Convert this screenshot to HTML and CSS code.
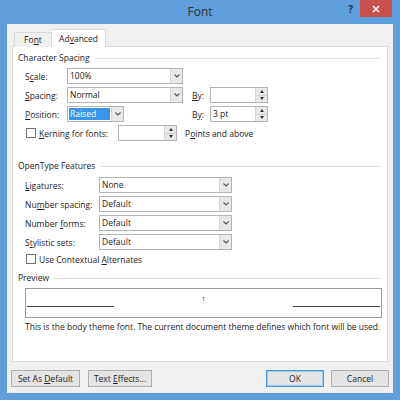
FILE: index.html
```html
<!DOCTYPE html>
<html>
<head>
<meta charset="utf-8">
<title>Font</title>
<link rel="stylesheet" href="styles.css">
</head>
<body>
<div class="win">
  <div class="titlebar">
    <div></div>
    <div class="title">Font</div>
    <div class="ctrls">
      <span class="help">?</span>
      <span class="close"><svg width="8" height="8" viewBox="0 0 8 8"><path d="M1 1L7 7M7 1L1 7" stroke="#fff" stroke-width="1.6"/></svg></span>
    </div>
  </div>
  <div class="client">
    <div class="tabs">
      <div class="tab">Fo<u>n</u>t</div>
      <div class="tab active">Ad<u>v</u>anced</div>
    </div>
    <div class="panel">
      <div class="legend">Character Spacing</div>
      <div class="rows cs">
        <div class="row">
          <span class="lbl w42">S<u>c</u>ale:</span>
          <div class="select w116"><span class="val">100%</span><span class="arr"><svg width="6" height="4" viewBox="0 0 6 4"><path d="M0.5 0.5L3 3L5.5 0.5" fill="none" stroke="#555" stroke-width="1.1"/></svg></span></div>
        </div>
        <div class="row">
          <span class="lbl w42"><u>S</u>pacing:</span>
          <div class="selcell"><div class="select w116"><span class="val">Normal</span><span class="arr"><svg width="6" height="4" viewBox="0 0 6 4"><path d="M0.5 0.5L3 3L5.5 0.5" fill="none" stroke="#555" stroke-width="1.1"/></svg></span></div></div>
          <span class="lbl w18"><u>B</u>y:</span>
          <div class="spinbox w58"><span class="val"></span><span class="spin"><span class="up"></span><span class="dn"></span></span></div>
        </div>
        <div class="row">
          <span class="lbl w42"><u>P</u>osition:</span>
          <div class="selcell"><div class="select w57"><span class="val sel">Raised</span><span class="arr"><svg width="6" height="4" viewBox="0 0 6 4"><path d="M0.5 0.5L3 3L5.5 0.5" fill="none" stroke="#555" stroke-width="1.1"/></svg></span></div></div>
          <span class="lbl w18">B<u>y</u>:</span>
          <div class="spinbox w58"><span class="val">3 pt</span><span class="spin"><span class="up"></span><span class="dn"></span></span></div>
        </div>
        <div class="row">
          <span class="chklbl w93"><span class="check"></span><span><u>K</u>erning for fonts:</span></span>
          <div class="spinbox w59"><span class="val"></span><span class="spin"><span class="up"></span><span class="dn"></span></span></div>
          <span class="after">P<u>o</u>ints and above</span>
        </div>
      </div>

      <div class="legend ot">OpenType Features</div>
      <div class="rows ots">
        <div class="row">
          <span class="lbl w74"><u>L</u>igatures:</span>
          <div class="select w133"><span class="val">None</span><span class="arr"><svg width="6" height="4" viewBox="0 0 6 4"><path d="M0.5 0.5L3 3L5.5 0.5" fill="none" stroke="#555" stroke-width="1.1"/></svg></span></div>
        </div>
        <div class="row">
          <span class="lbl w74">Nu<u>m</u>ber spacing:</span>
          <div class="select w133"><span class="val">Default</span><span class="arr"><svg width="6" height="4" viewBox="0 0 6 4"><path d="M0.5 0.5L3 3L5.5 0.5" fill="none" stroke="#555" stroke-width="1.1"/></svg></span></div>
        </div>
        <div class="row">
          <span class="lbl w74">Number <u>f</u>orms:</span>
          <div class="select w133"><span class="val">Default</span><span class="arr"><svg width="6" height="4" viewBox="0 0 6 4"><path d="M0.5 0.5L3 3L5.5 0.5" fill="none" stroke="#555" stroke-width="1.1"/></svg></span></div>
        </div>
        <div class="row">
          <span class="lbl w74">S<u>t</u>ylistic sets:</span>
          <div class="select w133"><span class="val">Default</span><span class="arr"><svg width="6" height="4" viewBox="0 0 6 4"><path d="M0.5 0.5L3 3L5.5 0.5" fill="none" stroke="#555" stroke-width="1.1"/></svg></span></div>
        </div>
      </div>
      <div class="checkrow"><span class="check"></span><span>Use Contextual <u>A</u>lternates</span></div>

      <div class="legend pvh">Preview</div>
      <div class="preview">
        <span class="pline"></span>
        <span class="pmid">1</span>
        <span class="pline"></span>
      </div>
      <div class="desc">This is the body theme font. The current document theme defines which font will be used.</div>
    </div>
    <div class="buttons">
      <button class="btn w69">Set As <u>D</u>efault</button>
      <button class="btn w64">Text <u>E</u>ffects...</button>
      <span class="grow"></span>
      <button class="btn w58 default">OK</button>
      <button class="btn w58">Cancel</button>
    </div>
  </div>
</div>
</body>
</html>
```

FILE: styles.css
```css
* { box-sizing: border-box; }
html, body { margin: 0; padding: 0; }
body {
  width: 400px;
  height: 400px;
  overflow: hidden;
  font-family: "Open Sans", "Noto Sans", sans-serif;
  font-size: 8.5px;
  color: #222;
}
u { text-decoration: underline; text-underline-offset: 1px; text-decoration-thickness: 1px; }

.win {
  width: 400px;
  height: 400px;
  background: #5e9fdc;
  display: flex;
  flex-direction: column;
}

.titlebar {
  height: 24px;
  display: grid;
  grid-template-columns: 1fr auto 1fr;
  align-items: center;
}
.title {
  font-size: 12px;
  color: #333;
  line-height: 24px;
}
.ctrls {
  justify-self: end;
  align-self: start;
  display: flex;
  align-items: flex-start;
  margin-right: 8px;
}
.help {
  font-size: 10px;
  font-weight: 700;
  color: #1f3556;
  margin-top: 3px;
  margin-right: 7px;
  line-height: 12px;
}
.close {
  width: 32px;
  height: 17px;
  background: #c9524f;
  display: flex;
  align-items: center;
  justify-content: center;
}

.client {
  flex: 1;
  margin: 0 7px 7px 7px;
  background: #f0f0f0;
  padding: 5px 4px 5px 4px;
  display: flex;
  flex-direction: column;
}

.tabs {
  display: flex;
  align-items: flex-end;
  margin-left: 3px;
  height: 18px;
  margin-bottom: -1px;
  position: relative;
  z-index: 1;
}
.tab {
  height: 15px;
  width: 38px;
  border: 1px solid #d9d9d9;
  border-bottom: none;
  background: #f0f0f0;
  text-align: center;
  line-height: 14px;
}
.tab.active {
  height: 18px;
  width: 54px;
  background: #fff;
  border-left: none;
  line-height: 17px;
}

.panel {
  margin: 0 1px;
  height: 316px;
  background: #fff;
  border: 1px solid #d9d9d9;
  padding: 5px 6px 0 5px;
}

.legend {
  display: flex;
  align-items: center;
  height: 12px;
  line-height: 12px;
}
.legend::after {
  content: "";
  flex: 1;
  margin-left: 5px;
  border-top: 1px solid #e0e0e0;
}

.rows { display: flex; flex-direction: column; gap: 3px; padding-left: 7px; }
.rows.cs { margin-top: 4px; }
.row { display: flex; align-items: center; height: 16px; }

.lbl { flex: none; display: block; white-space: nowrap; }
.chklbl { flex: none; display: flex; align-items: center; white-space: nowrap; }
.w18 { width: 18px; }
.w42 { width: 42px; }
.w74 { width: 74px; }
.w93 { width: 93px; }
.selcell { width: 125px; flex: none; }

.select, .spinbox {
  flex: none;
  height: 16px;
  border: 1px solid #b4b4b4;
  background: #fff;
  display: flex;
}
.w57 { width: 57px; }
.w58 { width: 58px; }
.w59 { width: 59px; }
.w116 { width: 116px; }
.w133 { width: 133px; }
.w64 { width: 64px; }
.w69 { width: 69px; }

.val {
  flex: 1;
  padding-left: 2px;
  line-height: 14px;
  white-space: nowrap;
  overflow: hidden;
}
.val.sel {
  margin: 1px;
  padding-left: 1px;
  line-height: 12px;
  background: #3a94ec;
  color: #fff;
}
.arr {
  width: 12px;
  flex: none;
  background: #e8e8e8;
  border-left: 1px solid #d6d6d6;
  display: flex;
  align-items: center;
  justify-content: center;
}
.spin {
  width: 12px;
  flex: none;
  background: #e8e8e8;
  border-left: 1px solid #d6d6d6;
  display: flex;
  flex-direction: column;
}
.spin .up, .spin .dn {
  flex: 1;
  display: flex;
  align-items: center;
  justify-content: center;
}
.spin .up { border-bottom: 1px solid #d0d0d0; }
.spin .up::before {
  content: "";
  border-left: 2.5px solid transparent;
  border-right: 2.5px solid transparent;
  border-bottom: 3px solid #333;
}
.spin .dn::before {
  content: "";
  border-left: 2.5px solid transparent;
  border-right: 2.5px solid transparent;
  border-top: 3px solid #333;
}
.after { margin-left: 8px; white-space: nowrap; }

.check {
  width: 10px;
  height: 10px;
  border: 1px solid #707070;
  background: #fff;
  margin-left: 1px;
  margin-right: 3px;
  flex: none;
}

.legend.ot { margin-top: 19px; }
.rows.ots { margin-top: 5px; }

.checkrow {
  margin-top: 3px;
  padding-left: 7px;
  height: 12px;
  display: flex;
  align-items: center;
}

.legend.pvh { margin-top: 7px; }
.preview {
  margin: 4px 0 0 7px;
  width: 357px;
  height: 30px;
  border: 1px solid #9a9a9a;
  display: flex;
  align-items: flex-start;
  padding: 0 1px;
}
.pline {
  width: 87px;
  margin-top: 17px;
  border-top: 1px solid #444;
}
.pmid {
  flex: 1;
  text-align: center;
  font-size: 6px;
  line-height: 8px;
  margin-top: 6px;
}
.desc {
  margin: 3px 0 0 7px;
  height: 12px;
  line-height: 12px;
  white-space: nowrap;
}

.buttons {
  margin-top: 8px;
  height: 17px;
  display: flex;
  gap: 8px;
}
.grow { flex: 1; }
.btn {
  flex: none;
  height: 17px;
  padding: 0;
  border: 1px solid #adadad;
  background: #e4e4e4;
  font-family: inherit;
  font-size: 8.5px;
  color: #222;
  line-height: 15px;
}
.btn.default {
  border-color: #4a96d8;
  box-shadow: inset 0 0 0 1px #9fcbf0;
  margin-right: -1px;
}
```
